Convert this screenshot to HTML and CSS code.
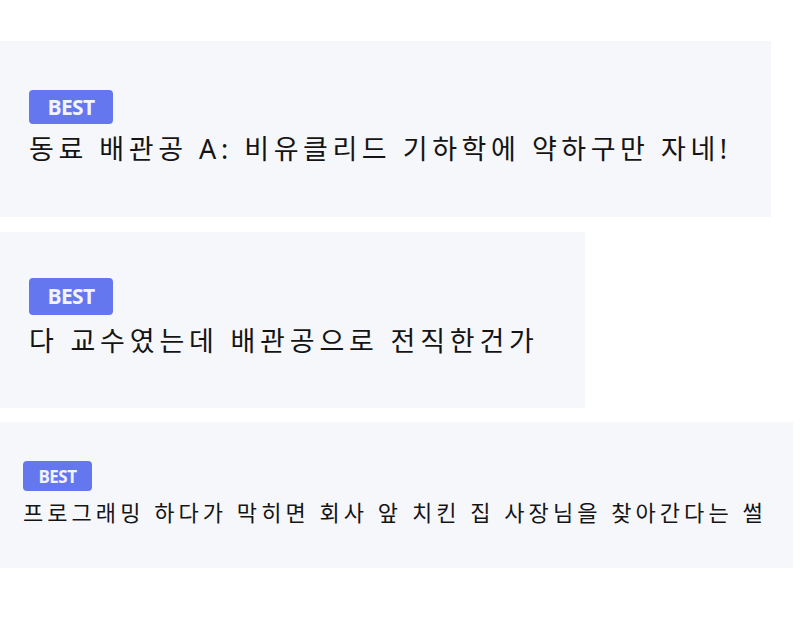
FILE: index.html
```html
<!DOCTYPE html>
<html lang="ko">
<head>
<meta charset="utf-8">
<link rel="stylesheet" href="styles.css">
</head>
<body>
<main class="list">
  <article class="card card-a">
    <span class="badge">BEST</span>
    <p class="title">동료 배관공 A: 비유클리드 기하학에 약하구만 자네!</p>
  </article>
  <article class="card card-b">
    <span class="badge badge-b">BEST</span>
    <p class="title title-b">다 교수였는데 배관공으로 전직한건가</p>
  </article>
  <article class="card card-c">
    <span class="badge badge-c">BEST</span>
    <p class="title title-c">프로그래밍 하다가 막히면 회사 앞 치킨 집 사장님을 찾아간다는 썰</p>
  </article>
</main>
</body>
</html>
```
FILE: styles.css
```css
html, body {
  margin: 0;
  padding: 0;
  background: #ffffff;
}
.list {
  display: flex;
  flex-direction: column;
  align-items: flex-start;
  padding-top: 41px;
}
.card {
  box-sizing: border-box;
  background: #f6f7fb;
  display: flex;
  flex-direction: column;
  align-items: flex-start;
}
.card-a {
  width: 771px;
  height: 176px;
  padding: 49px 0 0 29px;
}
.card-b {
  width: 585px;
  height: 176px;
  padding: 46px 0 0 29px;
  margin-top: 15px;
}
.card-c {
  width: 793px;
  height: 146px;
  padding: 39px 0 0 23px;
  margin-top: 14px;
}
.badge {
  box-sizing: border-box;
  width: 84px;
  height: 34px;
  border-radius: 4px;
  background: #6577ee;
  color: #f1f3ff;
  font-family: "Open Sans", "Liberation Sans", sans-serif;
  font-weight: 700;
  font-size: 21px;
  letter-spacing: -0.6px;
  display: flex;
  align-items: center;
  justify-content: center;
  line-height: 1;
}
.badge-b {
  height: 37px;
}
.badge-c {
  width: 69px;
  height: 30px;
  font-size: 17px;
  letter-spacing: -0.5px;
}
.title {
  margin: 0;
  margin-top: 9px;
  font-family: "Noto Sans", "Noto Sans CJK KR", sans-serif;
  font-weight: 400;
  font-size: 27px;
  line-height: 32px;
  letter-spacing: 4.55px;
  word-spacing: 0;
  color: #141414;
  white-space: nowrap;
}
.title-b {
  margin-top: 10px;
  letter-spacing: 4.8px;
}
.title-c {
  margin-top: 8px;
  font-size: 22px;
  line-height: 26px;
  letter-spacing: 4.05px;
}
```
